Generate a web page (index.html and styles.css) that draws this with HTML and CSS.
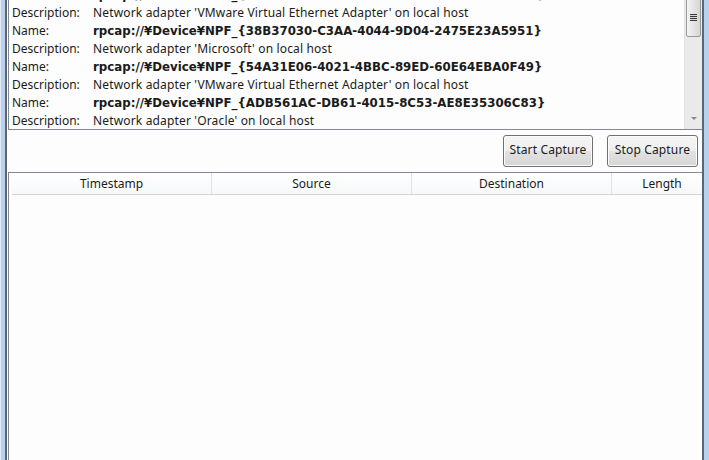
FILE: index.html
```html
<!DOCTYPE html>
<html>
<head>
<meta charset="utf-8">
<link rel="stylesheet" href="styles.css">
</head>
<body>
<div class="window">
  <div class="client">
    <div class="listbox">
      <div class="items">
        <div class="row name"><span class="label">Name:</span><span class="value">rpcap://¥Device¥NPF_{1C2A6F2B-0D7E-4C8B-9A31-7E52B0C4D1A2}</span></div>
        <div class="row"><span class="label">Description:</span><span class="value">Network adapter 'VMware Virtual Ethernet Adapter' on local host</span></div>
        <div class="row name"><span class="label">Name:</span><span class="value">rpcap://¥Device¥NPF_{38B37030-C3AA-4044-9D04-2475E23A5951}</span></div>
        <div class="row"><span class="label">Description:</span><span class="value">Network adapter 'Microsoft' on local host</span></div>
        <div class="row name"><span class="label">Name:</span><span class="value">rpcap://¥Device¥NPF_{54A31E06-4021-4BBC-89ED-60E64EBA0F49}</span></div>
        <div class="row"><span class="label">Description:</span><span class="value">Network adapter 'VMware Virtual Ethernet Adapter' on local host</span></div>
        <div class="row name"><span class="label">Name:</span><span class="value">rpcap://¥Device¥NPF_{ADB561AC-DB61-4015-8C53-AE8E35306C83}</span></div>
        <div class="row"><span class="label">Description:</span><span class="value">Network adapter 'Oracle' on local host</span></div>
      </div>
      <div class="vscroll">
        <div class="thumb"><span class="grip"></span></div>
        <div class="track"></div>
        <div class="arrow-down"></div>
      </div>
    </div>
    <div class="actions">
      <button class="btn">Start Capture</button>
      <button class="btn">Stop Capture</button>
    </div>
    <div class="listview">
      <div class="header">
        <div class="col">Timestamp</div>
        <div class="col">Source</div>
        <div class="col">Destination</div>
        <div class="col last">Length</div>
      </div>
      <div class="body"></div>
    </div>
  </div>
</div>
</body>
</html>
```
FILE: styles.css
```css
html, body {
  margin: 0;
  padding: 0;
  width: 709px;
  height: 460px;
  overflow: hidden;
}
body {
  font-family: "Noto Sans", "Noto Sans CJK JP", sans-serif;
  font-size: 12px;
  color: #1b1b1b;
}
.window {
  height: 460px;
  display: flex;
  background: #b9d1ea;
  border-left: 1px solid #e3ecf6;
  padding: 0 5px 0 4px;
  box-sizing: border-box;
}
.client {
  flex: 1;
  display: flex;
  flex-direction: column;
  background: #fcfdfc;
  border-left: 2px solid #5c6672;
  border-right: 2px solid #5c6672;
  min-width: 0;
}
.listbox {
  margin-top: -15px;
  margin-left: 1px;
  height: 145px;
  box-sizing: border-box;
  border: 1px solid #828790;
  border-right: none;
  display: flex;
  background: #fcfdfc;
  overflow: hidden;
}
.items {
  flex: 1;
  padding: 0 0 0 3px;
  min-width: 0;
}
.row {
  height: 18px;
  line-height: 18px;
  display: flex;
  white-space: nowrap;
}
.label {
  width: 81px;
  flex: none;
}
.value {
  flex: none;
  letter-spacing: 0.16px;
}
.row.name .value {
  font-family: "DejaVu Sans", "Noto Sans", sans-serif;
  font-weight: bold;
  font-size: 11.8px;
  letter-spacing: 0;
}
.vscroll {
  width: 17px;
  flex: none;
  display: flex;
  flex-direction: column;
  background: #eaeaea;
  border-left: 1px solid #e1e1e1;
}
.thumb {
  margin-top: 12px;
  height: 37px;
  margin-left: 1px;
  margin-right: 1px;
  border: 1px solid #9a9a9a;
  border-radius: 2px;
  background: linear-gradient(to right, #f4f4f4, #e4e4e4 50%, #d6d6d6);
  display: flex;
  align-items: center;
  justify-content: center;
}
.grip {
  width: 7px;
  height: 7px;
  background: repeating-linear-gradient(to bottom, #3a3a3a 0 1px, #d8d8d8 1px 2px);
}
.track {
  flex: 1;
}
.arrow-down {
  height: 17px;
  display: flex;
  align-items: center;
  justify-content: center;
}
.arrow-down::before {
  content: "";
  border-left: 3px solid transparent;
  border-right: 3px solid transparent;
  border-top: 3px solid #8a8a8a;
  margin-bottom: 4px;
}
.actions {
  display: flex;
  justify-content: flex-end;
  gap: 14px;
  padding: 5px 4px 5px 0;
}
.btn {
  height: 32px;
  font-family: inherit;
  font-size: 12px;
  letter-spacing: 0.15px;
  white-space: nowrap;
  color: #1b1b1b;
  padding: 0 0 3px 0;
  border: 1px solid #707070;
  border-radius: 3px;
  background: linear-gradient(to bottom, #f6f6f6 0%, #eeeeee 50%, #e2e2e2 51%, #d6d6d6 100%);
  box-shadow: inset 0 0 0 1px #fcfcfc;
}
.btn:first-child {
  width: 90px;
}
.btn:last-child {
  width: 91px;
}
.listview {
  flex: 1;
  margin-left: 1px;
  border-top: 1px solid #828790;
  border-left: 1px solid #828790;
  padding-left: 3px;
  display: flex;
  flex-direction: column;
  background: #fcfdfc;
  overflow: hidden;
}
.header {
  display: flex;
  height: 21px;
  border-bottom: 1px solid #d5d5d5;
  background: linear-gradient(to bottom, #ffffff, #f7f8f9);
}
.col {
  width: 200px;
  flex: none;
  text-align: center;
  line-height: 21px;
  border-right: 1px solid #e2e3ea;
  box-sizing: border-box;
}
.col.last {
  width: 100px;
  border-right: none;
}
.body {
  flex: 1;
}
```
